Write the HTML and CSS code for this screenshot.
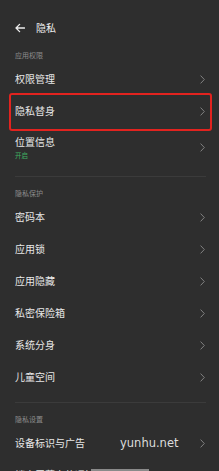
FILE: index.html
```html
<!DOCTYPE html>
<html lang="zh">
<head>
<meta charset="utf-8">
<link rel="stylesheet" href="styles.css">
</head>
<body>
<div class="screen">
  <div class="statusbar"></div>
  <div class="header">
    <svg class="back" width="10" height="10" viewBox="0 0 10 10"><path d="M9.5 5H1M4.6 1.4L1 5l3.6 3.6" fill="none" stroke="#ececec" stroke-width="1.3" stroke-linecap="round" stroke-linejoin="round"/></svg>
    <span class="title">隐私</span>
  </div>

  <div class="label">应用权限</div>
  <div class="row"><span class="text">权限管理</span><svg class="chev" width="5" height="9" viewBox="0 0 5 9"><path d="M0.6 0.6L4.3 4.5L0.6 8.4" fill="none" stroke="#8a8a8a" stroke-width="0.9"/></svg></div>
  <div class="row"><span class="text">隐私替身</span><svg class="chev" width="5" height="9" viewBox="0 0 5 9"><path d="M0.6 0.6L4.3 4.5L0.6 8.4" fill="none" stroke="#8a8a8a" stroke-width="0.9"/></svg><div class="mark"></div></div>
  <div class="row tall"><div class="lines"><span class="text">位置信息</span><span class="sub">开启</span></div><svg class="chev" width="5" height="9" viewBox="0 0 5 9"><path d="M0.6 0.6L4.3 4.5L0.6 8.4" fill="none" stroke="#8a8a8a" stroke-width="0.9"/></svg></div>

  <div class="divider"></div>
  <div class="label">隐私保护</div>
  <div class="row"><span class="text">密码本</span><svg class="chev" width="5" height="9" viewBox="0 0 5 9"><path d="M0.6 0.6L4.3 4.5L0.6 8.4" fill="none" stroke="#8a8a8a" stroke-width="0.9"/></svg></div>
  <div class="row"><span class="text">应用锁</span><svg class="chev" width="5" height="9" viewBox="0 0 5 9"><path d="M0.6 0.6L4.3 4.5L0.6 8.4" fill="none" stroke="#8a8a8a" stroke-width="0.9"/></svg></div>
  <div class="row"><span class="text">应用隐藏</span><svg class="chev" width="5" height="9" viewBox="0 0 5 9"><path d="M0.6 0.6L4.3 4.5L0.6 8.4" fill="none" stroke="#8a8a8a" stroke-width="0.9"/></svg></div>
  <div class="row"><span class="text">私密保险箱</span><svg class="chev" width="5" height="9" viewBox="0 0 5 9"><path d="M0.6 0.6L4.3 4.5L0.6 8.4" fill="none" stroke="#8a8a8a" stroke-width="0.9"/></svg></div>
  <div class="row"><span class="text">系统分身</span><svg class="chev" width="5" height="9" viewBox="0 0 5 9"><path d="M0.6 0.6L4.3 4.5L0.6 8.4" fill="none" stroke="#8a8a8a" stroke-width="0.9"/></svg></div>
  <div class="row"><span class="text">儿童空间</span><svg class="chev" width="5" height="9" viewBox="0 0 5 9"><path d="M0.6 0.6L4.3 4.5L0.6 8.4" fill="none" stroke="#8a8a8a" stroke-width="0.9"/></svg></div>

  <div class="divider"></div>
  <div class="label">隐私设置</div>
  <div class="row"><span class="text">设备标识与广告</span><svg class="chev" width="5" height="9" viewBox="0 0 5 9"><path d="M0.6 0.6L4.3 4.5L0.6 8.4" fill="none" stroke="#8a8a8a" stroke-width="0.9"/></svg></div>
  <div class="row"><span class="text">锁定屏幕上的通知</span><svg class="chev" width="5" height="9" viewBox="0 0 5 9"><path d="M0.6 0.6L4.3 4.5L0.6 8.4" fill="none" stroke="#8a8a8a" stroke-width="0.9"/></svg></div>

  <div class="watermark">yunhu.net</div>
  <div class="handle"></div>
</div>
</body>
</html>
```
FILE: styles.css
```css
html, body {
  margin: 0;
  padding: 0;
  background: #2e2e2e;
}
.screen {
  position: relative;
  width: 219px;
  height: 471px;
  overflow: hidden;
  background: #2e2e2e;
  font-family: "Noto Sans CJK SC", "Noto Sans", sans-serif;
  color: #e8e8e8;
  display: flex;
  flex-direction: column;
}
.statusbar {
  height: 14px;
  flex: none;
}
.header {
  height: 33px;
  box-sizing: border-box;
  padding: 0 0 5px 15px;
  display: flex;
  align-items: center;
  flex: none;
}
.back {
  display: block;
}
.title {
  margin-left: 11px;
  font-size: 10px;
  color: #eeeeee;
  line-height: 1;
}
.label {
  height: 16px;
  flex: none;
  display: flex;
  align-items: center;
  padding-left: 15px;
  font-size: 7px;
  color: #8c8c8c;
  line-height: 1;
}
.row {
  position: relative;
  height: 32px;
  flex: none;
  display: flex;
  align-items: center;
  justify-content: space-between;
  padding: 0 14px 0 15px;
}
.row.tall {
  height: 40px;
}
.text {
  font-size: 10px;
  line-height: 1;
  color: #e8e8e8;
}
.lines {
  display: flex;
  flex-direction: column;
  gap: 5px;
  padding-top: 1px;
}
.sub {
  font-size: 6.5px;
  line-height: 1;
  color: #3fae62;
}
.chev {
  display: block;
  flex: none;
}
.mark {
  position: absolute;
  left: 9px;
  right: 7px;
  top: -2px;
  bottom: -4px;
  border: 2.5px solid #e2231f;
  border-radius: 3px;
}
.divider {
  height: 1px;
  flex: none;
  margin: 9px 13px 8px 15px;
  background: #3b3b3b;
}
.watermark {
  position: absolute;
  left: 120px;
  top: 435px;
  font-family: "DejaVu Sans", sans-serif;
  font-size: 11.5px;
  line-height: 16px;
  color: #dcdcdc;
}
.handle {
  position: absolute;
  left: 91px;
  top: 469px;
  width: 58px;
  height: 2px;
  background: #8a8a8a;
}
```
